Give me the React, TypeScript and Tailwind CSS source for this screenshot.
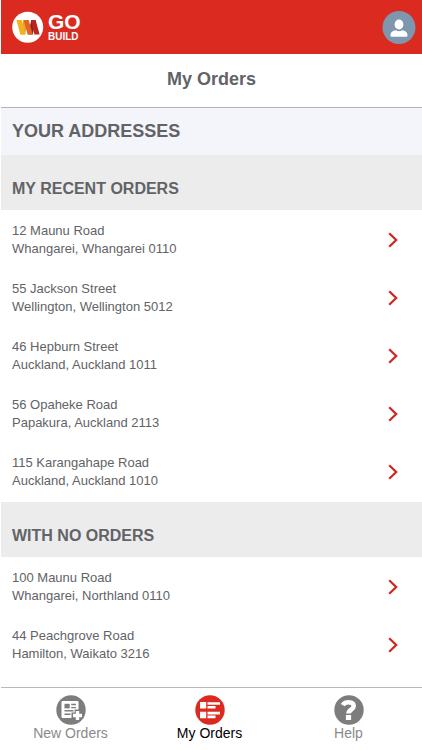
type Address = { street: string; city: string };

const recent: Address[] = [
  { street: "12 Maunu Road", city: "Whangarei, Whangarei 0110" },
  { street: "55 Jackson Street", city: "Wellington, Wellington 5012" },
  { street: "46 Hepburn Street", city: "Auckland, Auckland 1011" },
  { street: "56 Opaheke Road", city: "Papakura, Auckland 2113" },
  { street: "115 Karangahape Road", city: "Auckland, Auckland 1010" },
];

const withoutOrders: Address[] = [
  { street: "100 Maunu Road", city: "Whangarei, Northland 0110" },
  { street: "44 Peachgrove Road", city: "Hamilton, Waikato 3216" },
];

function Logo() {
  return (
    <svg viewBox="0 0 32 32" className="size-8" aria-hidden="true">
      <circle cx="15.7" cy="16.2" r="15.5" fill="#fff" />
      <path d="M11.2 9h4.6l-2.600 14.500H8.600z" fill="#e9a13a" />
      <path d="M4.400 9h5.200l4 14.500H8.400z" fill="#f3b21c" />
      <path d="M19.200 9h4.200l-2.600 14.500h-4.600z" fill="#8f2320" />
      <path d="M11.600 9h5l4.200 14.500h-5.200z" fill="#e4641f" />
      <path d="M19 9h4.600l4 14.500h-5.200z" fill="#b8261f" />
    </svg>
  );
}

function UserIcon() {
  return (
    <svg viewBox="0 0 34 34" className="size-[34px]" aria-hidden="true">
      <circle cx="17" cy="17.500" r="16.500" fill="#7e97af" />
      <ellipse cx="17" cy="14.500" rx="4.400" ry="5" fill="#fff" />
      <path d="M8.500 25.600c0-3.400 2.200-4.900 5.400-5.300 2 1.300 4.200 1.300 6.200 0 3.200.4 5.400 1.900 5.400 5.300 0 .8-.4 1.200-1.200 1.200H9.700c-.8 0-1.200-.4-1.200-1.200z" fill="#fff" />
    </svg>
  );
}

function NewOrdersIcon() {
  return (
    <svg viewBox="0 0 30 30" className="size-[30px]" aria-hidden="true">
      <circle cx="15" cy="15" r="14.700" fill="#7d7d7d" />
      <rect x="5.500" y="6" width="17" height="17" rx="1" fill="#fff" />
      <rect x="8.500" y="8.800" width="5.200" height="4.600" fill="#7d7d7d" />
      <path d="M15.200 9.500h4.800M15.200 12.600h4.800M8.500 15.800h9M8.500 19.200h6" stroke="#7d7d7d" strokeWidth="1.400" />
      <path d="M21.500 14.600v12M15.500 20.500h12" stroke="#7d7d7d" strokeWidth="5.800" />
      <path d="M21.500 16v9M17 20.500h9" stroke="#fff" strokeWidth="3.400" />
    </svg>
  );
}

function MyOrdersIcon() {
  return (
    <svg viewBox="0 0 30 30" className="size-[30px]" aria-hidden="true">
      <circle cx="15" cy="15" r="14.700" fill="#db2b20" />
      <path d="M5 7h6.200v6.600H5zM5 16.800h6.200v6.400H5zM12.500 7.200H25v2.600H12.500zM12.500 11h8v2.600h-8zM12.500 16.800H25v2.600H12.500zM12.500 20.600h8v2.600h-8z" fill="#fff" />
    </svg>
  );
}

function HelpIcon() {
  return (
    <svg viewBox="0 0 30 30" className="size-[30px]" aria-hidden="true">
      <circle cx="15" cy="15" r="14.700" fill="#7d7d7d" />
      <path d="M8.800 10.200c1.200-2.200 3.200-3 5.600-3 3.200 0 5.300 1.400 5.300 3.900 0 3.500-5.200 3.400-5.200 7.400" fill="none" stroke="#fff" strokeWidth="4.600" />
      <rect x="11.900" y="20" width="5.200" height="5" fill="#fff" />
    </svg>
  );
}

function Section({ title, items }: { title: string; items: Address[] }) {
  return (
    <section>
      <h3 className="bg-[#ececec] px-[11px] pt-[22px] pb-[9px] text-base leading-6 font-bold">{title}</h3>
      <ul className="py-px">
        {items.map((a) => (
          <li key={a.street}>
            <button type="button" className="flex w-full items-center justify-between py-[11px] pr-6 pl-[11px] text-left text-[13px] leading-[18px]">
              <span>
                <span className="block">{a.street}</span>
                <span className="block">{a.city}</span>
              </span>
              <svg viewBox="0 0 10 16" className="h-4 w-[10px]" fill="none" stroke="#cf2a22" strokeWidth="2.300" aria-hidden="true">
                <path d="M1.200 1.200L8.200 8l-7 6.800" />
              </svg>
            </button>
          </li>
        ))}
      </ul>
    </section>
  );
}

export default function App() {
  return (
    <div className="flex min-h-screen flex-col bg-white pl-px font-['Liberation_Sans',Arial,sans-serif] text-[#626366]">
      <header className="flex h-[54px] items-center justify-between bg-[#db2b20] pr-[6px] pl-[11px]">
        <a href="#" className="flex items-center gap-1 font-bold text-white">
          <Logo />
          <span>
            <span className="block text-[21px] leading-5">GO</span>
            <span className="block text-[10px] leading-[10px]">BUILD</span>
          </span>
        </a>
        <button type="button" aria-label="Account">
          <UserIcon />
        </button>
      </header>
      <main className="flex-1">
        <h1 className="border-b border-[#b3b3b5] pt-[13px] pb-4 text-center text-lg leading-6 font-bold">My Orders</h1>
        <h2 className="bg-[#f3f5fa] px-[11px] pt-[11px] pb-3 text-lg leading-6 font-bold">YOUR ADDRESSES</h2>
        <Section title="MY RECENT ORDERS" items={recent} />
        <Section title="WITH NO ORDERS" items={withoutOrders} />
      </main>
      <nav className="grid h-[63px] grid-cols-3 border-t border-[#b9b9b9] pt-[7px] pr-1 text-sm leading-4 text-[#8a8a8a]">
        <a href="#" className="flex flex-col items-center">
          <NewOrdersIcon />
          New Orders
        </a>
        <a href="#" aria-current="page" className="flex flex-col items-center text-black">
          <MyOrdersIcon />
          My Orders
        </a>
        <a href="#" className="flex flex-col items-center">
          <HelpIcon />
          Help
        </a>
      </nav>
    </div>
  );
}
